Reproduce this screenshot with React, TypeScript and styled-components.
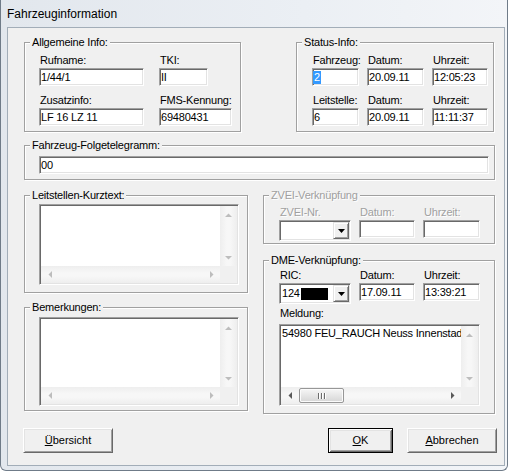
import React from 'react';
import styled, { createGlobalStyle, css } from 'styled-components';

const GlobalStyle = createGlobalStyle`
  html, body {
    margin: 0;
    padding: 0;
    background: #ffffff;
  }
  body {
    font-family: 'Liberation Sans', Arial, sans-serif;
  }
`;

const uiFont = css`
  font-family: 'Liberation Sans', Arial, sans-serif;
  font-size: 11px;
  line-height: 13px;
  letter-spacing: -0.2px;
  color: #000000;
`;

const sunken = css`
  box-sizing: border-box;
  border: 1px solid;
  border-color: #a0a0a0 #ffffff #ffffff #a0a0a0;
  box-shadow: inset 1px 1px 0 #696969, inset -1px -1px 0 #e3e3e3;
  background: #ffffff;
`;

const Window = styled.div`
  width: 508px;
  height: 471px;
  box-sizing: border-box;
  display: flex;
  flex-direction: column;
  background: linear-gradient(to right, #e2e7ed 0%, #ebeff4 60%, #f3f5f8 100%);
  border: 1px solid #6f7b88;
  border-top: none;
  border-radius: 0 0 6px 6px;
  overflow: hidden;
`;

const TitleBar = styled.div`
  height: 27px;
  flex-shrink: 0;
  padding-left: 6px;
  font-family: 'Liberation Sans', Arial, sans-serif;
  font-size: 12px;
  line-height: 28px;
  color: #000000;
  overflow: hidden;
`;

const Client = styled.div`
  flex: 1;
  margin: 0 2px 4px 6px;
  box-sizing: border-box;
  border: 1px solid #a2adb8;
  background: #f0f0f0;
  padding: 14px 0 0 16px;
  display: flex;
  flex-direction: column;
`;

const TopRow = styled.div`
  display: flex;
  gap: 55px;
`;

const LowerRow = styled.div`
  display: flex;
  gap: 15px;
  margin-top: 15px;
`;

const Column = styled.div<{ $w: number; $gap: number }>`
  width: ${p => p.$w}px;
  display: flex;
  flex-direction: column;
  gap: ${p => p.$gap}px;
`;

const GroupBox = styled.div<{ $w: number; $h: number; $pad: string; $mt?: number }>`
  position: relative;
  box-sizing: border-box;
  width: ${p => p.$w}px;
  height: ${p => p.$h}px;
  margin-top: ${p => p.$mt ?? 0}px;
  padding: ${p => p.$pad};
  border: 1px solid #a0a0a0;
  box-shadow: 1px 1px 0 #ffffff, inset 1px 1px 0 #ffffff;
  flex-shrink: 0;
`;

const disabledText = css`
  color: #a0a0a0;
  text-shadow: 1px 1px 0 #ffffff;
`;

const Caption = styled.span<{ $disabled?: boolean }>`
  ${uiFont};
  position: absolute;
  top: -7px;
  left: 5px;
  padding: 0 2px;
  background: #f0f0f0;
  white-space: nowrap;
  ${p => p.$disabled && disabledText};
`;

const FieldGrid = styled.div<{ $cols: string; $gap: number }>`
  display: grid;
  grid-template-columns: ${p => p.$cols};
  column-gap: ${p => p.$gap}px;
  row-gap: 8px;
  align-items: start;
`;

const Field = styled.div`
  display: flex;
  flex-direction: column;
  align-items: flex-start;
`;

const FieldLabel = styled.span<{ $disabled?: boolean; $mb?: number }>`
  ${uiFont};
  display: block;
  height: 13px;
  padding-left: 1px;
  margin-bottom: ${p => p.$mb ?? 1}px;
  white-space: nowrap;
  ${p => p.$disabled && disabledText};
`;

const Edit = styled.div<{ $w: number }>`
  ${sunken};
  ${uiFont};
  width: ${p => p.$w}px;
  height: 18px;
  padding: 0 0 0 1px;
  line-height: 16px;
  white-space: nowrap;
  overflow: hidden;
`;

const Selected = styled.span`
  display: inline-block;
  margin-left: -1px;
  padding: 0 1px;
  line-height: 13px;
  background: #3399ff;
  color: #ffffff;
`;

const Combo = styled.div<{ $w: number }>`
  ${sunken};
  ${uiFont};
  width: ${p => p.$w}px;
  height: 21px;
  padding: 1px;
  display: flex;
`;

const ComboText = styled.div`
  flex: 1;
  display: flex;
  align-items: center;
  padding-left: 1px;
  white-space: nowrap;
  overflow: hidden;
`;

const Redacted = styled.span`
  display: inline-block;
  width: 27px;
  height: 12px;
  background: #000000;
  margin-left: 1px;
`;

const DropButton = styled.div`
  box-sizing: border-box;
  width: 16px;
  height: 17px;
  background: #f0f0f0;
  border: 1px solid;
  border-color: #e3e3e3 #696969 #696969 #e3e3e3;
  box-shadow: inset 1px 1px 0 #ffffff, inset -1px -1px 0 #a0a0a0;
  display: flex;
  align-items: center;
  justify-content: center;
`;

const Memo = styled.div<{ $w: number; $h: number }>`
  ${sunken};
  width: ${p => p.$w}px;
  height: ${p => p.$h}px;
  padding: 1px;
  display: grid;
  grid-template-columns: minmax(0, 1fr) 17px;
  grid-template-rows: minmax(0, 1fr) 17px;
`;

const MemoText = styled.div`
  ${uiFont};
  padding: 1px 0 0 1px;
  white-space: nowrap;
  overflow: hidden;
`;

const VScroll = styled.div`
  background: linear-gradient(to right, #eeeeee, #f7f7f7 40%, #f7f7f7 60%, #eeeeee);
  display: flex;
  flex-direction: column;
  justify-content: space-between;
`;

const HScroll = styled.div`
  background: linear-gradient(to bottom, #eeeeee, #f7f7f7 40%, #f7f7f7 60%, #eeeeee);
  display: flex;
  align-items: center;
`;

const ScrollButton = styled.div`
  width: 17px;
  height: 17px;
  flex-shrink: 0;
  display: flex;
  align-items: center;
  justify-content: center;
`;

const Track = styled.div`
  flex: 1;
  height: 100%;
  display: flex;
  align-items: center;
`;

const Thumb = styled.div<{ $offset: number; $w: number }>`
  box-sizing: border-box;
  margin-left: ${p => p.$offset}px;
  width: ${p => p.$w}px;
  height: 15px;
  border: 1px solid #979797;
  border-radius: 2px;
  background: linear-gradient(to bottom, #f6f6f6, #e6e6e6 50%, #d6d6d6);
  box-shadow: inset 0 0 0 1px #fbfbfb;
  display: flex;
  align-items: center;
  justify-content: center;
  gap: 2px;
`;

const GripLine = styled.span`
  width: 1px;
  height: 6px;
  background: #6c6c6c;
  box-shadow: 1px 0 0 #ffffff;
`;

const Corner = styled.div`
  background: #f0f0f0;
`;

const ButtonRow = styled.div`
  width: 474px;
  margin: 14px 0 0 -1px;
  display: flex;
  justify-content: space-between;
`;

const ButtonGroup = styled.div`
  display: flex;
  gap: 14px;
`;

const Button = styled.button<{ $w: number; $default?: boolean }>`
  ${uiFont};
  letter-spacing: 0;
  width: ${p => p.$w}px;
  height: 25px;
  box-sizing: border-box;
  padding: 0;
  margin: 0;
  background: #f0f0f0;
  border: 1px solid;
  border-color: #ffffff #696969 #696969 #ffffff;
  box-shadow: inset 1px 1px 0 #e3e3e3, inset -1px -1px 0 #a0a0a0;
  ${p =>
    p.$default &&
    css`
      border-color: #000000;
      box-shadow: inset 1px 1px 0 #ffffff, inset -1px -1px 0 #696969, inset 2px 2px 0 #e3e3e3,
        inset -2px -2px 0 #a0a0a0;
    `}
`;

const Key = styled.span`
  text-decoration: underline;
  text-underline-offset: 1px;
`;

type Dir = 'up' | 'down' | 'left' | 'right';

function Arrow({ dir, active = false }: { dir: Dir; active?: boolean }) {
  const vertical = dir === 'up' || dir === 'down';
  const points = {
    up: '0,4 3.5,0.5 7,4',
    down: '0,0 7,0 3.5,3.5',
    left: '4,0 4,7 0.5,3.5',
    right: '0,0 0,7 3.5,3.5',
  }[dir];
  return (
    <svg width={vertical ? 7 : 4} height={vertical ? 4 : 7} viewBox={vertical ? '0 0 7 4' : '0 0 4 7'}>
      <polygon points={points} fill={active ? '#5a5a5a' : '#bdbdbd'} />
    </svg>
  );
}

function ComboArrow() {
  return (
    <svg width="7" height="4" viewBox="0 0 7 4">
      <polygon points="0,0 7,0 3.5,4" fill="#000000" />
    </svg>
  );
}

function MultiLine({
  w,
  h,
  text,
  thumb,
}: {
  w: number;
  h: number;
  text?: string;
  thumb?: { offset: number; w: number };
}) {
  return (
    <Memo $w={w} $h={h}>
      <MemoText>{text}</MemoText>
      <VScroll>
        <ScrollButton>
          <Arrow dir="up" />
        </ScrollButton>
        <ScrollButton>
          <Arrow dir="down" />
        </ScrollButton>
      </VScroll>
      <HScroll>
        <ScrollButton>
          <Arrow dir="left" active={!!thumb} />
        </ScrollButton>
        <Track>
          {thumb && (
            <Thumb $offset={thumb.offset} $w={thumb.w}>
              <GripLine />
              <GripLine />
              <GripLine />
            </Thumb>
          )}
        </Track>
        <ScrollButton>
          <Arrow dir="right" active={!!thumb} />
        </ScrollButton>
      </HScroll>
      <Corner />
    </Memo>
  );
}

export default function App() {
  return (
    <>
      <GlobalStyle />
      <Window>
        <TitleBar>Fahrzeuginformation</TitleBar>
        <Client>
          <TopRow>
            <GroupBox $w={217} $h={90} $pad="11px 0 0 14px">
              <Caption>Allgemeine Info:</Caption>
              <FieldGrid $cols="105px 73px" $gap={15}>
                <Field>
                  <FieldLabel>Rufname:</FieldLabel>
                  <Edit $w={105}>1/44/1</Edit>
                </Field>
                <Field>
                  <FieldLabel>TKI:</FieldLabel>
                  <Edit $w={49}>II</Edit>
                </Field>
                <Field>
                  <FieldLabel>Zusatzinfo:</FieldLabel>
                  <Edit $w={105}>LF 16 LZ 11</Edit>
                </Field>
                <Field>
                  <FieldLabel>FMS-Kennung:</FieldLabel>
                  <Edit $w={73}>69480431</Edit>
                </Field>
              </FieldGrid>
            </GroupBox>

            <GroupBox $w={198} $h={90} $pad="11px 0 0 15px">
              <Caption>Status-Info:</Caption>
              <FieldGrid $cols="47px 57px 56px" $gap={8}>
                <Field>
                  <FieldLabel>Fahrzeug:</FieldLabel>
                  <Edit $w={47}>
                    <Selected>2</Selected>
                  </Edit>
                </Field>
                <Field>
                  <FieldLabel>Datum:</FieldLabel>
                  <Edit $w={57}>20.09.11</Edit>
                </Field>
                <Field>
                  <FieldLabel>Uhrzeit:</FieldLabel>
                  <Edit $w={56}>12:05:23</Edit>
                </Field>
                <Field>
                  <FieldLabel>Leitstelle:</FieldLabel>
                  <Edit $w={47}>6</Edit>
                </Field>
                <Field>
                  <FieldLabel>Datum:</FieldLabel>
                  <Edit $w={57}>20.09.11</Edit>
                </Field>
                <Field>
                  <FieldLabel>Uhrzeit:</FieldLabel>
                  <Edit $w={56}>11:11:37</Edit>
                </Field>
              </FieldGrid>
            </GroupBox>
          </TopRow>

          <GroupBox $w={471} $h={35} $pad="10px 0 0 14px" $mt={13}>
            <Caption>Fahrzeug-Folgetelegramm:</Caption>
            <Edit $w={450}>00</Edit>
          </GroupBox>

          <LowerRow>
            <Column $w={224} $gap={14}>
              <GroupBox $w={224} $h={98} $pad="8px 0 0 14px">
                <Caption>Leitstellen-Kurztext:</Caption>
                <MultiLine w={200} h={81} />
              </GroupBox>
              <GroupBox $w={224} $h={104} $pad="9px 0 0 14px">
                <Caption>Bemerkungen:</Caption>
                <MultiLine w={200} h={89} />
              </GroupBox>
            </Column>

            <Column $w={232} $gap={16}>
              <GroupBox $w={232} $h={49} $pad="10px 0 0 15px">
                <Caption $disabled>ZVEI-Verknüpfung</Caption>
                <FieldGrid $cols="72px 56px 57px" $gap={8}>
                  <Field>
                    <FieldLabel $disabled>ZVEI-Nr.</FieldLabel>
                    <Combo $w={72}>
                      <ComboText />
                      <DropButton>
                        <ComboArrow />
                      </DropButton>
                    </Combo>
                  </Field>
                  <Field>
                    <FieldLabel $disabled>Datum:</FieldLabel>
                    <Edit $w={56} />
                  </Field>
                  <Field>
                    <FieldLabel $disabled>Uhrzeit:</FieldLabel>
                    <Edit $w={57} />
                  </Field>
                </FieldGrid>
              </GroupBox>

              <GroupBox $w={232} $h={154} $pad="8px 0 0 15px">
                <Caption>DME-Verknüpfung:</Caption>
                <FieldGrid $cols="72px 56px 57px" $gap={8}>
                  <Field>
                    <FieldLabel>RIC:</FieldLabel>
                    <Combo $w={72}>
                      <ComboText>
                        124
                        <Redacted />
                      </ComboText>
                      <DropButton>
                        <ComboArrow />
                      </DropButton>
                    </Combo>
                  </Field>
                  <Field>
                    <FieldLabel>Datum:</FieldLabel>
                    <Edit $w={56}>17.09.11</Edit>
                  </Field>
                  <Field>
                    <FieldLabel>Uhrzeit:</FieldLabel>
                    <Edit $w={57}>13:39:21</Edit>
                  </Field>
                </FieldGrid>
                <Field style={{ marginTop: 3 }}>
                  <FieldLabel $mb={4}>Meldung:</FieldLabel>
                  <MultiLine w={201} h={82} text="54980 FEU_RAUCH Neuss Innenstadt" thumb={{ offset: 1, w: 45 }} />
                </Field>
              </GroupBox>
            </Column>
          </LowerRow>

          <ButtonRow>
            <Button $w={90}>
              <Key>Ü</Key>bersicht
            </Button>
            <ButtonGroup>
              <Button $w={65} $default>
                <Key>O</Key>K
              </Button>
              <Button $w={90}>
                <Key>A</Key>bbrechen
              </Button>
            </ButtonGroup>
          </ButtonRow>
        </Client>
      </Window>
    </>
  );
}
